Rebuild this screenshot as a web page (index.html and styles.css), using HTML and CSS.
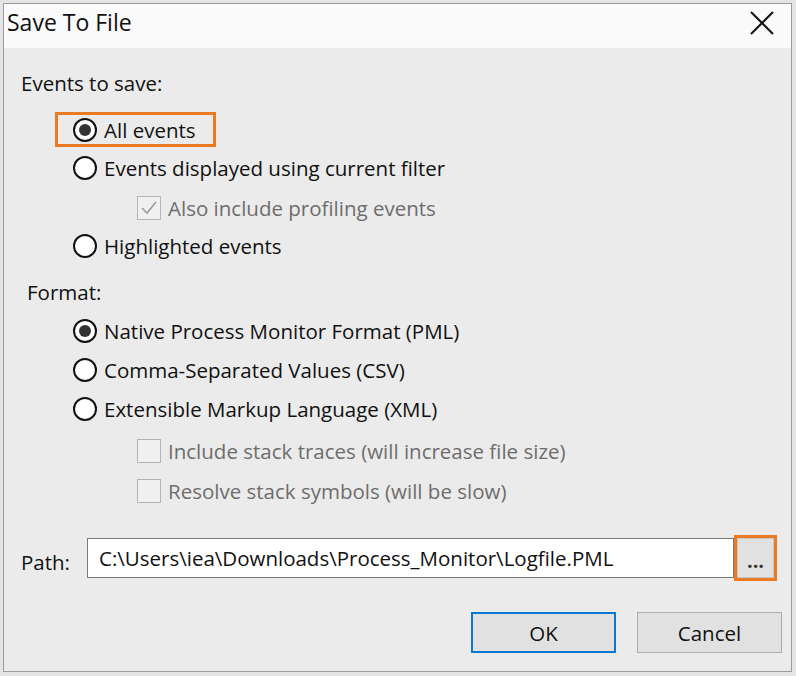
FILE: index.html
```html
<!DOCTYPE html>
<html>
<head>
<meta charset="utf-8">
<link rel="stylesheet" href="styles.css">
</head>
<body>
<div class="window">
  <div class="titlebar">
    <span class="title">Save To File</span>
    <svg class="close" width="26" height="24" viewBox="0 0 26 24"><path d="M2 1 L24 23 M24 1 L2 23" stroke="#111" stroke-width="2" fill="none"/></svg>
  </div>
  <div class="content">
    <div class="row label l1">Events to save:</div>
    <div class="row hl-row">
      <div class="highlight">
        <span class="radio on"></span><span class="txt">All events</span>
      </div>
    </div>
    <div class="row opt r2"><span class="radio"></span><span class="txt">Events displayed using current filter</span></div>
    <div class="row sub r3"><span class="check dis"><svg width="20" height="20" viewBox="0 0 20 20"><path d="M3 10 L8 15 L17 4" stroke="#9a9a9a" stroke-width="1.6" fill="none"/></svg></span><span class="txt gray">Also include profiling events</span></div>
    <div class="row opt r4"><span class="radio"></span><span class="txt">Highlighted events</span></div>
    <div class="row label l2">Format:</div>
    <div class="row opt r5"><span class="radio on"></span><span class="txt">Native Process Monitor Format (PML)</span></div>
    <div class="row opt r6"><span class="radio"></span><span class="txt">Comma-Separated Values (CSV)</span></div>
    <div class="row opt r7"><span class="radio"></span><span class="txt">Extensible Markup Language (XML)</span></div>
    <div class="row sub r8"><span class="check dis"></span><span class="txt gray">Include stack traces (will increase file size)</span></div>
    <div class="row sub r9"><span class="check dis"></span><span class="txt gray">Resolve stack symbols (will be slow)</span></div>
    <div class="pathrow">
      <span class="pathlabel">Path:</span>
      <div class="input">C:\Users\iea\Downloads\Process_Monitor\Logfile.PML</div>
      <div class="browse"><div class="browse-inner">...</div></div>
    </div>
    <div class="buttons">
      <div class="btn ok">OK</div>
      <div class="btn cancel">Cancel</div>
    </div>
  </div>
</div>
</body>
</html>
```

FILE: styles.css
```css
html, body {
  margin: 0;
  padding: 0;
}
body {
  background: #e4e4e4;
  width: 796px;
  height: 676px;
  overflow: hidden;
  font-family: "Open Sans", "Noto Sans", sans-serif;
  font-size: 20.5px;
  color: #111;
}
.window {
  margin: 3px 4px 0 3px;
  width: 787px;
  height: 667px;
  border: 1px solid #9c9c9c;
  background: #ebebeb;
  display: flex;
  flex-direction: column;
}
.titlebar {
  height: 44px;
  background: #fafafa;
  display: flex;
  align-items: center;
  justify-content: space-between;
  flex-shrink: 0;
}
.title {
  font-size: 23px;
  padding-left: 3px;
  margin-top: -8px;
  color: #111;
}
.close {
  margin-right: 16px;
  margin-top: -6px;
}
.content {
  flex: 1;
  display: flex;
  flex-direction: column;
  padding-top: 16px;
}
.row {
  display: flex;
  align-items: center;
  flex-shrink: 0;
}
.label { padding-left: 17px; height: 38px; }
.l2 { padding-left: 23px; margin-top: 8px; }
.hl-row { height: 45px; padding-left: 51px; align-items: flex-end; }
.highlight {
  display: flex;
  align-items: center;
  border: 3px solid #ec7a22;
  height: 29px;
  padding: 0 17px 0 15px;
}
.opt { padding-left: 69px; height: 38px; }
.r2 { height: 42px; }
.sub { padding-left: 133px; height: 40px; }
.r3 { height: 38px; }
.r5 { height: 39px; }
.r6 { height: 40px; }
.r7 { height: 38px; }
.r8 { margin-top: 3px; }
.radio {
  width: 20px;
  height: 20px;
  border: 2px solid #111;
  border-radius: 50%;
  background: #fff;
  display: inline-flex;
  align-items: center;
  justify-content: center;
  flex-shrink: 0;
}
.radio.on::after {
  content: "";
  width: 12px;
  height: 12px;
  border-radius: 50%;
  background: #333;
}
.txt { margin-left: 7px; white-space: nowrap; }
.gray { color: #6d6d6d; }
.check {
  width: 22px;
  height: 22px;
  border: 1px solid #b4b4b4;
  background: #f0f0f0;
  display: inline-flex;
  align-items: center;
  justify-content: center;
  flex-shrink: 0;
}
.pathrow {
  display: flex;
  align-items: center;
  margin-top: 24px;
  height: 46px;
}
.pathlabel {
  width: 66px;
  padding-left: 17px;
  margin-top: 8px;
}
.input {
  width: 634px;
  height: 38px;
  border: 1px solid #7a7a7a;
  background: #fff;
  display: flex;
  align-items: center;
  padding-left: 11px;
  box-sizing: content-box;
  white-space: nowrap;
}
.browse {
  width: 37px;
  height: 40px;
  border: 3px solid #ec7a22;
  display: flex;
}
.browse-inner {
  flex: 1;
  background: #e1e1e1;
  border: 1px solid #c6c6c6;
  display: flex;
  align-items: flex-end;
  justify-content: center;
  font-size: 20px;
  font-weight: bold;
  line-height: 1;
  padding-bottom: 6px;
  color: #333;
}
.buttons {
  display: flex;
  justify-content: flex-end;
  gap: 21px;
  margin-top: 31px;
  padding-right: 9px;
}
.btn {
  width: 141px;
  height: 37px;
  background: #e1e1e1;
  border: 2px solid #adadad;
  display: flex;
  align-items: center;
  justify-content: center;
}
.ok { border-color: #0a78d0; }
.cancel { border: 1px solid #adadad; width: 143px; height: 39px; }
```
